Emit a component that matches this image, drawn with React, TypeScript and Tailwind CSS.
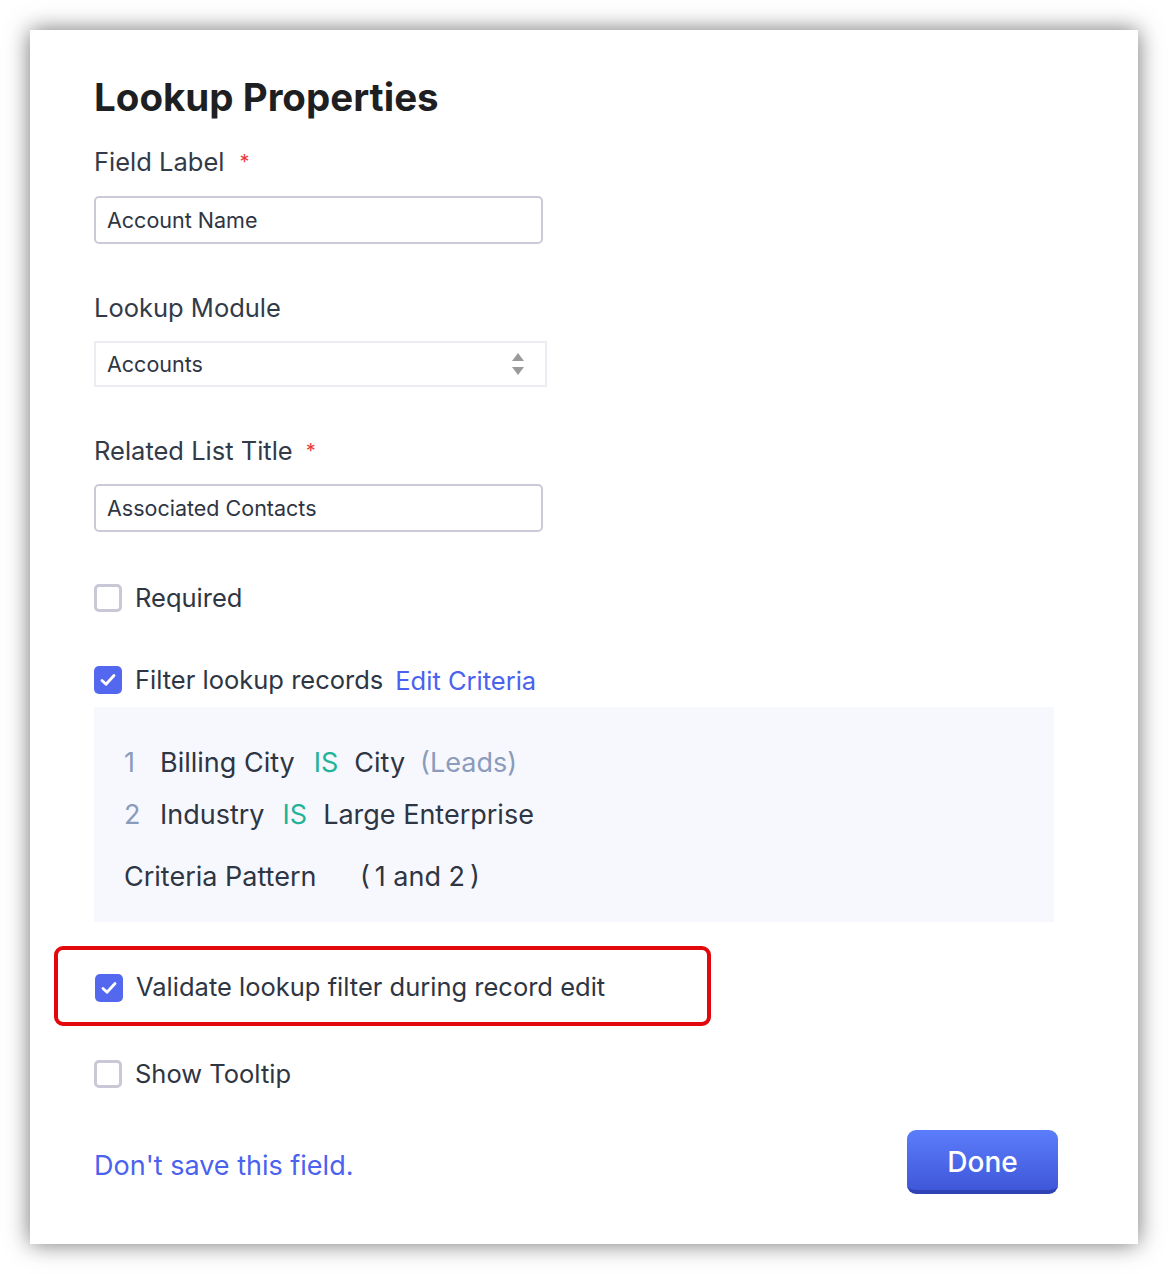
import React from 'react';

const font = { fontFamily: 'Inter, "Noto Sans", sans-serif' };

function Checkbox({ checked }: { checked: boolean }) {
    if (checked) {
        return (
            <span className="flex h-[28px] w-[28px] shrink-0 items-center justify-center rounded-[5px] bg-[#5468ef]">
                <svg width="20" height="20" viewBox="0 0 20 20" fill="none">
                    <path d="M4 10.5 L8 14.2 L16 5.5" stroke="white" strokeWidth="2.8" strokeLinecap="round" strokeLinejoin="round" />
                </svg>
            </span>
        );
    }
    return <span className="h-[28px] w-[28px] shrink-0 rounded-[5px] border-[3px] border-[#c9c8d6] bg-white" />;
}

function Label({ text, required, starGap }: { text: string; required?: boolean; starGap?: string }) {
    return (
        <div className="flex h-[32px] items-center text-[25.5px] text-[#333a48]">
            <span>{text}</span>
            {required && <span className={`${starGap} text-[20px] text-[#ee3a3a]`}>*</span>}
        </div>
    );
}

export default function App() {
    return (
        <div className="min-h-[1274px] bg-white pt-[30px] pl-[30px]" style={font}>
            <div className="flex w-[1108px] flex-col bg-white pt-[45px] pb-[50px] pl-[64px] pr-[80px] shadow-[0_0_22px_rgba(0,0,0,0.55)]">
                <h1 className="h-[44px] text-[38.5px] font-bold leading-[44px] text-[#1e1f23]">Lookup Properties</h1>

                <div className="mt-[27px]">
                    <Label text="Field Label" required starGap="ml-[15px]" />
                </div>
                <div className="mt-[18px] flex h-[48px] w-[449px] items-center rounded-[5px] border-2 border-[#cbcad8] px-[11px] text-[21.5px] text-[#2e3543]">
                    Account Name
                </div>

                <div className="mt-[48px]">
                    <Label text="Lookup Module" />
                </div>
                <div className="mt-[17px] flex h-[46px] w-[453px] items-center justify-between border-2 border-[#ececf3] pl-[11px] pr-[20px] text-[21.5px] text-[#2e3543]">
                    <span>Accounts</span>
                    <svg width="14" height="24" viewBox="0 0 14 24">
                        <path d="M7 1 L13 9 L1 9 Z" fill="#9a9a9a" />
                        <path d="M1 15 L13 15 L7 23 Z" fill="#9a9a9a" />
                    </svg>
                </div>

                <div className="mt-[48px]">
                    <Label text="Related List Title" required starGap="ml-[13px]" />
                </div>
                <div className="mt-[17px] flex h-[48px] w-[449px] items-center rounded-[5px] border-2 border-[#cbcad8] px-[11px] text-[21.5px] text-[#2e3543]">
                    Associated Contacts
                </div>

                <div className="mt-[52px] flex h-[28px] items-center gap-[13px] text-[25.5px] text-[#2e3543]">
                    <Checkbox checked={false} />
                    <span>Required</span>
                </div>

                <div className="mt-[54px] flex h-[28px] items-center text-[25.5px] text-[#2e3543]">
                    <Checkbox checked />
                    <span className="ml-[13px]">Filter lookup records</span>
                    <span className="ml-[12px] mt-[3px] text-[25.5px] text-[#4b62ef]">Edit Criteria</span>
                </div>

                <div className="mt-[13px] flex h-[215px] w-[960px] flex-col bg-[#f7f8fd] pt-[38px] pl-[30px] text-[27px] text-[#2e3543]">
                    <div className="flex h-[36px] items-center">
                        <span className="w-[36px] text-[#8a9bbc]">1</span>
                        <span>Billing City</span>
                        <span className="ml-[19px] text-[#1fb39a]">IS</span>
                        <span className="ml-[16px]">City</span>
                        <span className="ml-[15px] text-[#8a9bbc]">(Leads)</span>
                    </div>
                    <div className="mt-[16px] flex h-[36px] items-center">
                        <span className="w-[36px] text-[#8a9bbc]">2</span>
                        <span>Industry</span>
                        <span className="ml-[18px] text-[#1fb39a]">IS</span>
                        <span className="ml-[16px]">Large Enterprise</span>
                    </div>
                    <div className="mt-[26px] flex h-[36px] items-center">
                        <span className="w-[236px]">Criteria Pattern</span>
                        <span>({'\u2009'}1 and 2{'\u2009'})</span>
                    </div>
                </div>

                <div className="mt-[24px] -ml-[40px] flex h-[80px] w-[657px] items-center gap-[13px] rounded-[9px] border-[4px] border-[#e3080b] pl-[37px] pt-[3px] text-[25.5px] text-[#2e3543]">
                    <Checkbox checked />
                    <span>Validate lookup filter during record edit</span>
                </div>

                <div className="mt-[34px] flex h-[28px] items-center gap-[13px] text-[25.5px] text-[#2e3543]">
                    <Checkbox checked={false} />
                    <span>Show Tooltip</span>
                </div>

                <div className="mt-[42px] flex items-center justify-between">
                    <span className="mt-[8px] text-[27px] text-[#4b62ef]">Don't save this field.</span>
                    <button className="h-[64px] w-[151px] rounded-[9px] border-b-[4px] border-[#2f43b5] bg-gradient-to-b from-[#5c7dfb] to-[#3f57d9] pt-[3px] text-[28px] font-medium text-white">
                        Done
                    </button>
                </div>
            </div>
        </div>
    );
}
